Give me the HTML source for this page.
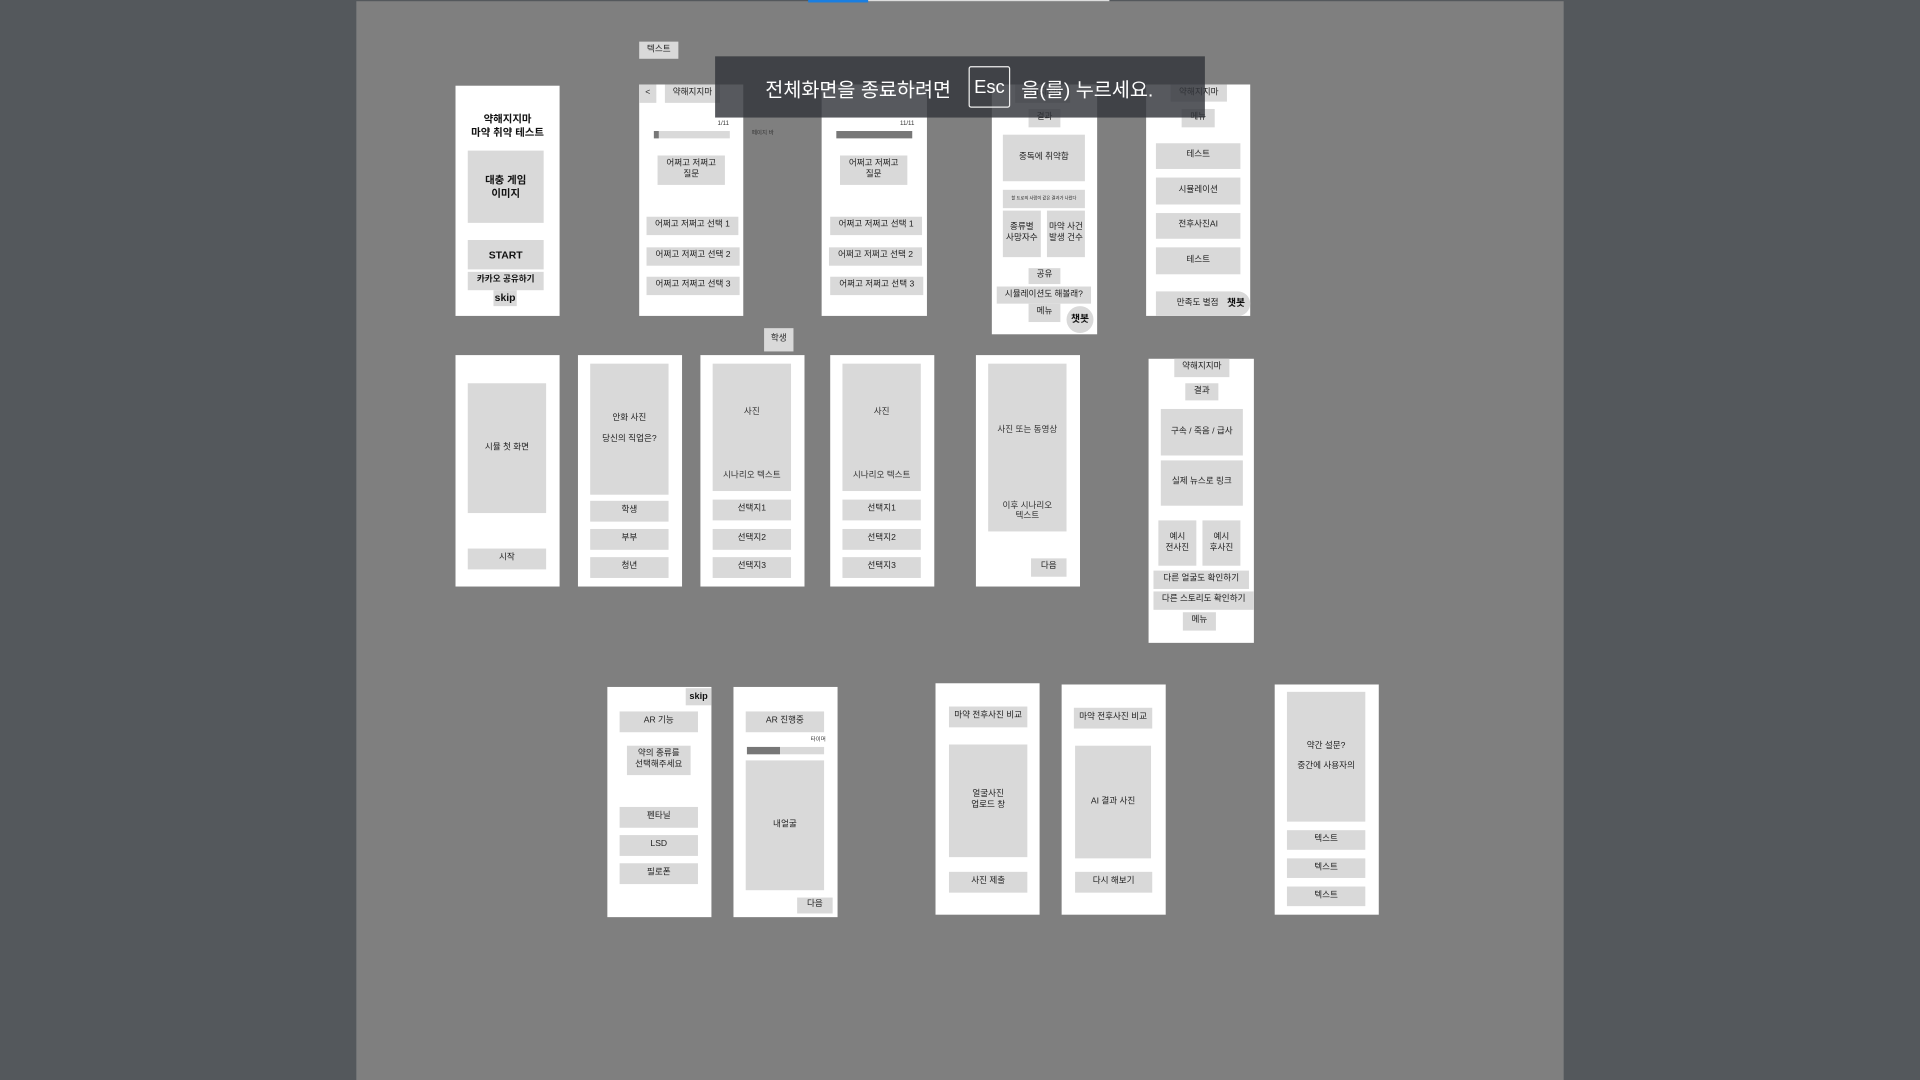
<!DOCTYPE html>
<html><head><meta charset="utf-8"><style>
html,body{margin:0;padding:0;width:1920px;height:1080px;overflow:hidden;background:#54585c}
#s{position:absolute;left:0;top:0;width:1568px;height:882px;transform:scale(1.22449);transform-origin:0 0;font-family:"Liberation Sans","Noto Sans CJK KR",sans-serif;color:#222}
div{box-sizing:border-box}
.a{position:absolute}
.f{position:absolute;background:#fff}
.b{position:absolute;background:#d9d9d9;display:flex;align-items:center;justify-content:center;text-align:center;font-size:7px;line-height:1.25;color:#222}
.t{position:absolute;font-size:5px;color:#333}
.bold{font-weight:bold;color:#111}
</style></head><body><div id="s">
<div class="a" style="left:291px;top:1px;width:986px;height:881px;background:#7f7f7f"></div>
<div class="a" style="left:660px;top:0;width:49px;height:2px;background:#1a7ee0"></div>
<div class="a" style="left:709px;top:0;width:197px;height:1px;background:#ddd"></div>

<!-- row 1 -->
<div class="f" style="left:372px;top:70px;width:85px;height:188px"></div>
<div class="a bold" style="left:372px;top:92px;width:85px;text-align:center;font-size:8.5px;line-height:11px">약해지지마<br>마약 취약 테스트</div>
<div class="b bold" style="left:382px;top:123px;width:62px;height:59px;font-size:8.5px">대충 게임<br>이미지</div>
<div class="b bold" style="left:382px;top:196px;width:62px;height:24px;font-size:8.5px">START</div>
<div class="b bold" style="left:382px;top:222px;width:62px;height:15px">카카오 공유하기</div>
<div class="b bold" style="left:403px;top:237px;width:19px;height:13px;font-size:8.5px">skip</div>

<div class="b" style="left:522px;top:34px;width:32px;height:14px">텍스트</div>

<div class="f" style="left:522px;top:69px;width:85px;height:189px"></div>
<div class="b" style="left:522px;top:69px;width:14px;height:15px">&lt;</div>
<div class="b" style="left:543px;top:69px;width:45px;height:15px">약해지지마</div>
<div class="t" style="left:586px;top:98px">1/11</div>
<div class="b" style="left:534px;top:107px;width:62px;height:6px"></div>
<div class="a" style="left:534px;top:107px;width:4px;height:6px;background:#777"></div>
<div class="b" style="left:537px;top:127px;width:55px;height:24px">어쩌고 저쩌고<br>질문</div>
<div class="b" style="left:528px;top:177px;width:75px;height:15px">어쩌고 저쩌고 선택 1</div>
<div class="b" style="left:528px;top:202px;width:76px;height:15px">어쩌고 저쩌고 선택 2</div>
<div class="b" style="left:528px;top:226px;width:76px;height:15px">어쩌고 저쩌고 선택 3</div>
<div class="t" style="left:614px;top:106px;font-size:4.5px">페이지 바</div>

<div class="f" style="left:671px;top:69px;width:86px;height:189px"></div>
<div class="t" style="left:735px;top:98px">11/11</div>
<div class="a" style="left:683px;top:107px;width:62px;height:6px;background:#777"></div>
<div class="b" style="left:686px;top:127px;width:55px;height:24px">어쩌고 저쩌고<br>질문</div>
<div class="b" style="left:678px;top:177px;width:75px;height:15px">어쩌고 저쩌고 선택 1</div>
<div class="b" style="left:677px;top:202px;width:76px;height:15px">어쩌고 저쩌고 선택 2</div>
<div class="b" style="left:678px;top:226px;width:76px;height:15px">어쩌고 저쩌고 선택 3</div>

<div class="f" style="left:810px;top:69px;width:86px;height:204px"></div>
<div class="b" style="left:829px;top:69px;width:45px;height:15px">약해지지마</div>
<div class="b" style="left:840px;top:89px;width:26px;height:15px">결과</div>
<div class="b" style="left:819px;top:110px;width:67px;height:38px">중독에 취약함</div>
<div class="b" style="left:819px;top:155px;width:67px;height:15px;font-size:3.5px">할 트로의 사람이 같은 결과가 나왔다</div>
<div class="b" style="left:819px;top:172px;width:31px;height:38px">종류별<br>사망자수</div>
<div class="b" style="left:855px;top:172px;width:31px;height:38px">마약 사건<br>발생 건수</div>
<div class="b" style="left:840px;top:219px;width:26px;height:13px">공유</div>
<div class="b" style="left:814px;top:234px;width:77px;height:14px">시뮬레이션도 해볼래?</div>
<div class="b" style="left:840px;top:248px;width:26px;height:15px">메뉴</div>
<div class="b bold" style="left:871px;top:250px;width:22px;height:22px;border-radius:50%;font-size:8px">챗봇</div>

<div class="f" style="left:936px;top:69px;width:85px;height:189px"></div>
<div class="b" style="left:956px;top:69px;width:46px;height:14px">약해지지마</div>
<div class="b" style="left:965px;top:89px;width:27px;height:15px">메뉴</div>
<div class="b" style="left:944px;top:117px;width:69px;height:21px">테스트</div>
<div class="b" style="left:944px;top:145px;width:69px;height:22px">시뮬레이션</div>
<div class="b" style="left:944px;top:174px;width:69px;height:21px">전후사진AI</div>
<div class="b" style="left:944px;top:202px;width:69px;height:22px">테스트</div>
<div class="b" style="left:944px;top:238px;width:77px;height:20px;border-radius:0 10px 10px 0;justify-content:flex-start;padding-left:17px">만족도 별점</div>
<div class="a bold" style="left:1002px;top:242px;font-size:8px">챗봇</div>

<!-- overlay -->
<div class="a" style="left:584px;top:46px;width:400px;height:50px;background:rgba(50,52,58,0.82)"></div>
<div class="a" style="left:625px;top:60px;font-size:16px;color:#fff;white-space:nowrap">전체화면을 종료하려면</div>
<div class="a" style="left:791px;top:54px;width:34px;height:34px;border:1px solid #eee;border-radius:2px;color:#fff;font-size:15px;display:flex;align-items:center;justify-content:center">Esc</div>
<div class="a" style="left:834px;top:60px;font-size:16px;color:#fff;white-space:nowrap">을(를) 누르세요.</div>

<!-- row 2 -->
<div class="b" style="left:624px;top:268px;width:24px;height:19px">학생</div>
<div class="f" style="left:372px;top:290px;width:85px;height:189px"></div>
<div class="b" style="left:382px;top:313px;width:64px;height:106px">시뮬 첫 화면</div>
<div class="b" style="left:382px;top:448px;width:64px;height:17px">시작</div>

<div class="f" style="left:472px;top:290px;width:85px;height:189px"></div>
<div class="b" style="left:482px;top:297px;width:64px;height:107px;line-height:2.3">안화 사진<br>당신의 직업은?</div>
<div class="b" style="left:482px;top:409px;width:64px;height:17px">학생</div>
<div class="b" style="left:482px;top:432px;width:64px;height:17px">부부</div>
<div class="b" style="left:482px;top:455px;width:64px;height:17px">청년</div>

<div class="f" style="left:572px;top:290px;width:85px;height:189px"></div>
<div class="b" style="left:582px;top:297px;width:64px;height:104px"></div>
<div class="t" style="left:582px;top:331px;width:64px;text-align:center;font-size:7px">사진</div>
<div class="t" style="left:582px;top:383px;width:64px;text-align:center;font-size:7px">시나리오 텍스트</div>
<div class="b" style="left:582px;top:408px;width:64px;height:17px">선택지1</div>
<div class="b" style="left:582px;top:432px;width:64px;height:17px">선택지2</div>
<div class="b" style="left:582px;top:455px;width:64px;height:17px">선택지3</div>

<div class="f" style="left:678px;top:290px;width:85px;height:189px"></div>
<div class="b" style="left:688px;top:297px;width:64px;height:104px"></div>
<div class="t" style="left:688px;top:331px;width:64px;text-align:center;font-size:7px">사진</div>
<div class="t" style="left:688px;top:383px;width:64px;text-align:center;font-size:7px">시나리오 텍스트</div>
<div class="b" style="left:688px;top:408px;width:64px;height:17px">선택지1</div>
<div class="b" style="left:688px;top:432px;width:64px;height:17px">선택지2</div>
<div class="b" style="left:688px;top:455px;width:64px;height:17px">선택지3</div>

<div class="f" style="left:797px;top:290px;width:85px;height:189px"></div>
<div class="b" style="left:807px;top:297px;width:64px;height:137px"></div>
<div class="t" style="left:807px;top:346px;width:64px;text-align:center;font-size:7px">사진 또는 동영상</div>
<div class="t" style="left:807px;top:410px;width:64px;text-align:center;font-size:7px;line-height:1.2">이후 시나리오<br>텍스트</div>
<div class="b" style="left:842px;top:456px;width:29px;height:15px">다음</div>

<div class="f" style="left:938px;top:293px;width:86px;height:232px"></div>
<div class="b" style="left:959px;top:293px;width:45px;height:15px">약해지지마</div>
<div class="b" style="left:968px;top:313px;width:27px;height:14px">결과</div>
<div class="b" style="left:948px;top:334px;width:67px;height:38px">구속 / 죽음 / 급사</div>
<div class="b" style="left:948px;top:376px;width:67px;height:37px">실제 뉴스로 링크</div>
<div class="b" style="left:946px;top:425px;width:31px;height:37px">예시<br>전사진</div>
<div class="b" style="left:982px;top:425px;width:31px;height:37px">예시<br>후사진</div>
<div class="b" style="left:942px;top:466px;width:78px;height:15px">다른 얼굴도 확인하기</div>
<div class="b" style="left:942px;top:483px;width:82px;height:15px">다른 스토리도 확인하기</div>
<div class="b" style="left:966px;top:500px;width:27px;height:15px">메뉴</div>

<!-- row 3 -->
<div class="f" style="left:496px;top:561px;width:85px;height:188px"></div>
<div class="b bold" style="left:560px;top:562px;width:21px;height:14px;font-size:7.5px">skip</div>
<div class="b" style="left:506px;top:581px;width:64px;height:17px">AR 기능</div>
<div class="b" style="left:512px;top:609px;width:52px;height:24px">약의 종류를<br>선택해주세요</div>
<div class="b" style="left:506px;top:659px;width:64px;height:17px">펜타닐</div>
<div class="b" style="left:506px;top:682px;width:64px;height:17px">LSD</div>
<div class="b" style="left:506px;top:705px;width:64px;height:17px">필로폰</div>

<div class="f" style="left:599px;top:561px;width:85px;height:188px"></div>
<div class="b" style="left:609px;top:581px;width:64px;height:17px">AR 진행중</div>
<div class="t" style="left:662px;top:601px;font-size:4.5px">타이머</div>
<div class="b" style="left:610px;top:610px;width:63px;height:6px"></div>
<div class="a" style="left:610px;top:610px;width:27px;height:6px;background:#777"></div>
<div class="b" style="left:609px;top:621px;width:64px;height:106px">내얼굴</div>
<div class="b" style="left:651px;top:733px;width:29px;height:13px">다음</div>

<div class="f" style="left:764px;top:558px;width:85px;height:189px"></div>
<div class="b" style="left:775px;top:577px;width:64px;height:17px">마약 전후사진 비교</div>
<div class="b" style="left:775px;top:608px;width:64px;height:92px">얼굴사진<br>업로드 창</div>
<div class="b" style="left:775px;top:712px;width:64px;height:17px">사진 제출</div>

<div class="f" style="left:867px;top:559px;width:85px;height:188px"></div>
<div class="b" style="left:877px;top:578px;width:64px;height:17px">마약 전후사진 비교</div>
<div class="b" style="left:878px;top:609px;width:62px;height:92px">AI 결과 사진</div>
<div class="b" style="left:878px;top:712px;width:63px;height:17px">다시 해보기</div>

<div class="f" style="left:1041px;top:559px;width:85px;height:188px"></div>
<div class="b" style="left:1051px;top:565px;width:64px;height:106px;line-height:2.3">약간 설문?<br>중간에 사용자의</div>
<div class="b" style="left:1051px;top:678px;width:64px;height:16px">텍스트</div>
<div class="b" style="left:1051px;top:701px;width:64px;height:16px">텍스트</div>
<div class="b" style="left:1051px;top:724px;width:64px;height:16px">텍스트</div>
</div></body></html>
